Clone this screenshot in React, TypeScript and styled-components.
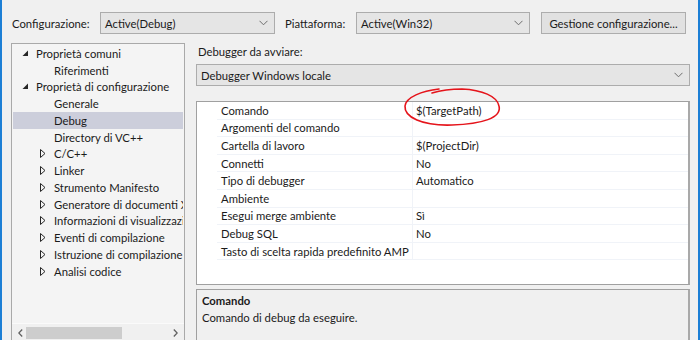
import React from "react";
import styled, { createGlobalStyle } from "styled-components";

const TEXT = "#1b1b1b";
const FONT = `Lato, "Noto Sans", sans-serif`;

const GlobalStyle = createGlobalStyle`
	html, body {
		margin: 0;
		padding: 0;
		background: #f0f0f0;
	}
	body {
		font-family: ${FONT};
		font-size: 11.3px;
		color: ${TEXT};
	}
`;

const Window = styled.div`
	position: relative;
	width: 700px;
	height: 340px;
	box-sizing: border-box;
	border-left: 2px solid #1c7fd5;
	border-right: 2px solid #1c7fd5;
	background: #f0f0f0;
	overflow: hidden;
`;

const TopBar = styled.div`
	display: flex;
	align-items: center;
	height: 22px;
	padding: 12px 0 0 10px;
`;

const Label = styled.span<{ $width: number; $indent?: number }>`
	width: ${(p) => p.$width}px;
	margin-left: ${(p) => p.$indent ?? 0}px;
	white-space: nowrap;
`;

const Combo = styled.div<{ $width?: number }>`
	display: flex;
	align-items: center;
	justify-content: space-between;
	box-sizing: border-box;
	width: ${(p) => (p.$width ? `${p.$width}px` : "100%")};
	height: 22px;
	padding: 0 6px 0 4px;
	background: #e5e5e5;
	border: 1px solid #acacac;
	white-space: nowrap;
`;

const WideCombo = styled(Combo)`
	margin-top: 3px;
`;

const Button = styled.div`
	display: flex;
	align-items: center;
	justify-content: center;
	box-sizing: border-box;
	width: 145px;
	height: 22px;
	margin-left: 11px;
	background: #e1e1e1;
	border: 1px solid #adadad;
	white-space: nowrap;
`;

const Body = styled.div`
	display: flex;
	gap: 11px;
	padding: 9px 0 0 9px;
`;

const TreePanel = styled.div`
	display: flex;
	flex-direction: column;
	box-sizing: border-box;
	width: 174px;
	height: 298px;
	background: #f4f4f4;
	border: 1px solid #a9a9a9;
	border-bottom: none;
`;

const TreeList = styled.div`
	flex: 1;
	padding: 1px 1px 0 1px;
	overflow: hidden;
`;

const TreeRow = styled.div<{ $level: number; $selected?: boolean }>`
	display: flex;
	align-items: center;
	height: 16.75px;
	padding-left: ${(p) => (p.$level === 0 ? 9 : 27)}px;
	background: ${(p) => (p.$selected ? "#cccedb" : "transparent")};
	white-space: nowrap;
	overflow: hidden;
`;

const Expander = styled.span`
	display: inline-flex;
	align-items: center;
	justify-content: flex-start;
	width: 14px;
	height: 16px;
	flex-shrink: 0;
`;

const HScroll = styled.div`
	display: flex;
	align-items: center;
	justify-content: space-between;
	height: 17px;
	padding: 0 6px;
	background: #f0f0f0;
	border-top: 1px solid #fafafa;
`;

const Thumb = styled.div`
	width: 96px;
	height: 12px;
	margin-left: 3px;
	margin-right: auto;
	background: #cdcdcd;
`;

const RightPanel = styled.div`
	display: flex;
	flex-direction: column;
	width: 494px;
`;

const Caption = styled.div`
	height: 18px;
	padding: 0 0 0 2px;
	line-height: 18px;
`;

const GridBox = styled.div`
	box-sizing: border-box;
	height: 184px;
	margin-top: 15px;
	padding: 0 0 0 20px;
	background: #fff;
	border: 1px solid #a0a0a0;
	border-right: 2px solid #a9a9a9;
`;

const GridRow = styled.div`
	display: grid;
	grid-template-columns: 195px 1fr;
	height: 17.6px;
	border-bottom: 1px solid #f0f3f8;
	box-sizing: border-box;
`;

const Cell = styled.div<{ $value?: boolean }>`
	display: flex;
	align-items: center;
	padding-left: ${(p) => (p.$value ? 3 : 4)}px;
	border-left: ${(p) => (p.$value ? "1px solid #f0f3f8" : "none")};
	white-space: nowrap;
	overflow: hidden;
`;

const Description = styled.div`
	box-sizing: border-box;
	height: 60px;
	margin-top: 4px;
	padding: 2px 5px;
	background: #f0f0f0;
	border: 1px solid #a0a0a0;
	border-bottom: none;
	border-right: 2px solid #a9a9a9;
	line-height: 17px;
`;

const DescTitle = styled.div`
	font-weight: bold;
`;

const Annotation = styled.svg`
	position: absolute;
	left: 0;
	top: 0;
	pointer-events: none;
`;

const Chevron = () => (
	<svg width="9" height="6" viewBox="0 0 9 6">
		<polyline points="0.5,0.8 4.5,4.8 8.5,0.8" fill="none" stroke="#6d6d6d" strokeWidth="1" />
	</svg>
);

const FilledArrow = () => (
	<svg width="7" height="7" viewBox="0 0 7 7">
		<polygon points="6,0.5 6,6 0.5,6" fill="#262626" />
	</svg>
);

const OpenArrow = () => (
	<svg width="6" height="9" viewBox="0 0 6 9">
		<polygon points="0.5,0.5 5,4.5 0.5,8.5" fill="none" stroke="#262626" strokeWidth="1" />
	</svg>
);

const ScrollArrow = ({ right }: { right?: boolean }) => (
	<svg width="5" height="8" viewBox="0 0 5 8">
		<polyline
			points={right ? "0.8,0.5 4.2,4 0.8,7.5" : "4.2,0.5 0.8,4 4.2,7.5"}
			fill="none"
			stroke="#606060"
			strokeWidth="1.3"
		/>
	</svg>
);

type TreeItem = { label: string; level: number; kind: "open" | "closed" | "leaf"; selected?: boolean };

const tree: TreeItem[] = [
	{ label: "Proprietà comuni", level: 0, kind: "open" },
	{ label: "Riferimenti", level: 1, kind: "leaf" },
	{ label: "Proprietà di configurazione", level: 0, kind: "open" },
	{ label: "Generale", level: 1, kind: "leaf" },
	{ label: "Debug", level: 1, kind: "leaf", selected: true },
	{ label: "Directory di VC++", level: 1, kind: "leaf" },
	{ label: "C/C++", level: 1, kind: "closed" },
	{ label: "Linker", level: 1, kind: "closed" },
	{ label: "Strumento Manifesto", level: 1, kind: "closed" },
	{ label: "Generatore di documenti XML", level: 1, kind: "closed" },
	{ label: "Informazioni di visualizzazione", level: 1, kind: "closed" },
	{ label: "Eventi di compilazione", level: 1, kind: "closed" },
	{ label: "Istruzione di compilazione personalizzata", level: 1, kind: "closed" },
	{ label: "Analisi codice", level: 1, kind: "closed" },
];

const props: [string, string][] = [
	["Comando", "$(TargetPath)"],
	["Argomenti del comando", ""],
	["Cartella di lavoro", "$(ProjectDir)"],
	["Connetti", "No"],
	["Tipo di debugger", "Automatico"],
	["Ambiente", ""],
	["Esegui merge ambiente", "Sì"],
	["Debug SQL", "No"],
	["Tasto di scelta rapida predefinito AMP", ""],
];

export default function App() {
	return (
		<Window>
			<GlobalStyle />
			<TopBar>
				<Label $width={88}>Configurazione:</Label>
				<Combo $width={175}>
					<span>Active(Debug)</span>
					<Chevron />
				</Combo>
				<Label $width={71} $indent={10}>
					Piattaforma:
				</Label>
				<Combo $width={174}>
					<span>Active(Win32)</span>
					<Chevron />
				</Combo>
				<Button>Gestione configurazione...</Button>
			</TopBar>
			<Body>
				<TreePanel>
					<TreeList>
						{tree.map((item) => (
							<TreeRow key={item.label} $level={item.level} $selected={item.selected}>
								<Expander>
									{item.kind === "open" && <FilledArrow />}
									{item.kind === "closed" && <OpenArrow />}
								</Expander>
								<span>{item.label}</span>
							</TreeRow>
						))}
					</TreeList>
					<HScroll>
						<ScrollArrow />
						<Thumb />
						<ScrollArrow right />
					</HScroll>
				</TreePanel>
				<RightPanel>
					<Caption>Debugger da avviare:</Caption>
					<WideCombo>
						<span>Debugger Windows locale</span>
						<Chevron />
					</WideCombo>
					<GridBox>
						{props.map(([name, value]) => (
							<GridRow key={name}>
								<Cell>{name}</Cell>
								<Cell $value>{value}</Cell>
							</GridRow>
						))}
					</GridBox>
					<Description>
						<DescTitle>Comando</DescTitle>
						<div>Comando di debug da eseguire.</div>
					</Description>
				</RightPanel>
			</Body>
			<Annotation width="700" height="340" viewBox="0 0 700 340">
				<path
					d="M 437 89 C 420 91, 404 97, 403 106 C 402 117, 420 126, 450 125 C 480 124, 500 118, 497 106 C 495 96, 480 90, 460 89 C 450 89, 440 90, 430 93"
					fill="none"
					stroke="#e5141b"
					strokeWidth="1.6"
					strokeLinecap="round"
				/>
			</Annotation>
		</Window>
	);
}
